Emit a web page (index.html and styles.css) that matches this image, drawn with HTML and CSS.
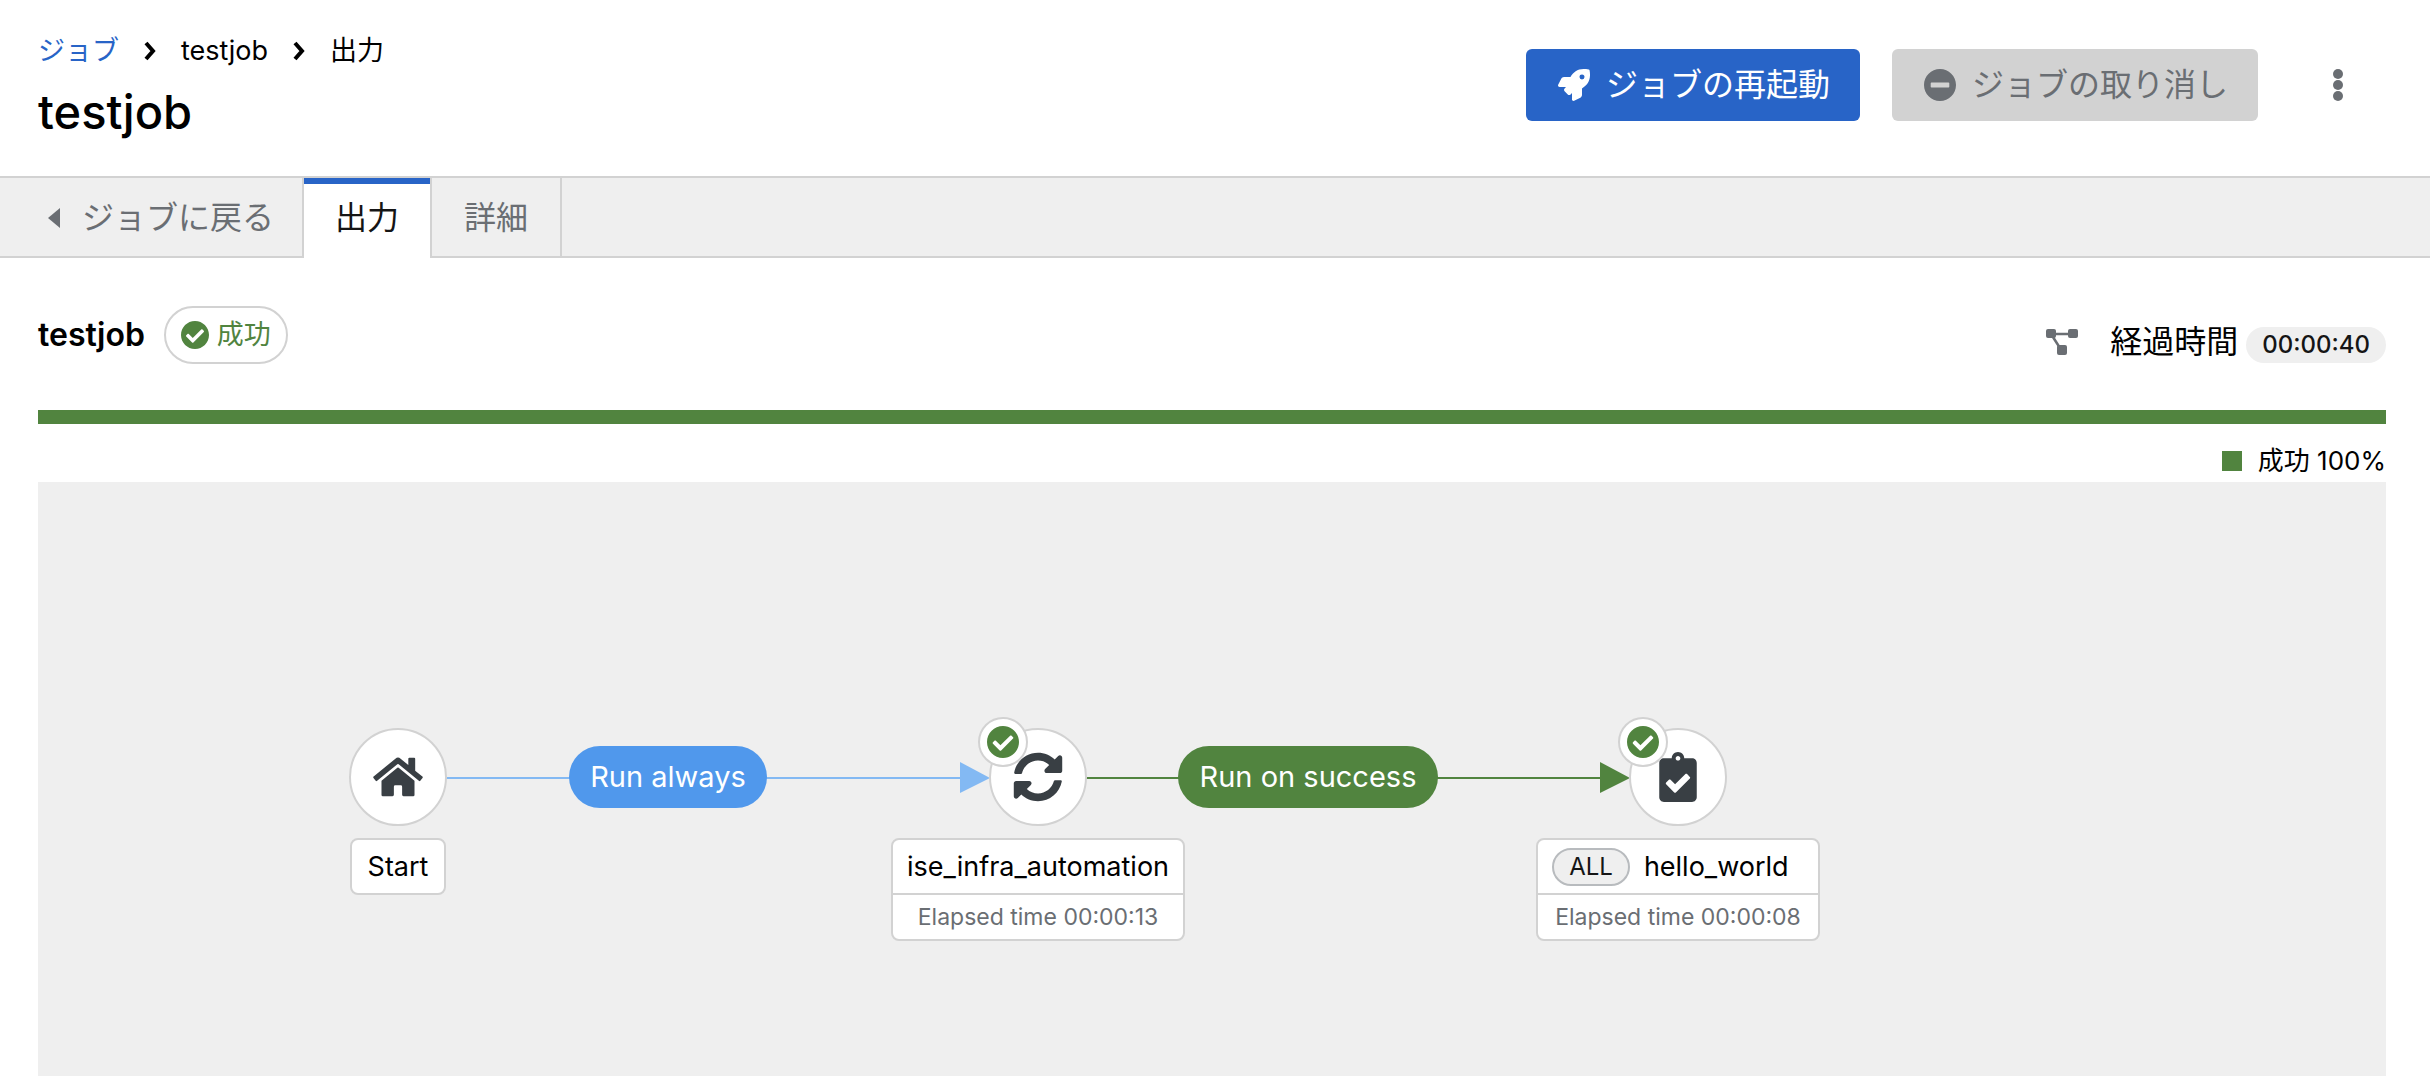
FILE: index.html
```html
<!DOCTYPE html>
<html lang="ja">
<head>
<meta charset="utf-8">
<meta name="viewport" content="width=device-width, initial-scale=1">
<title>testjob - 出力</title>
<link rel="stylesheet" href="styles.css">
</head>
<body>
<svg class="sprite" aria-hidden="true">
  <symbol id="check-circle" viewBox="8 8 496 496"><path d="M504 256c0 136.967-111.033 248-248 248S8 392.967 8 256 119.033 8 256 8s248 111.033 248 248zM227.314 387.314l184-184c6.248-6.248 6.248-16.379 0-22.627l-22.627-22.627c-6.248-6.249-16.379-6.249-22.628 0L216 308.118l-70.059-70.059c-6.248-6.248-16.379-6.248-22.628 0l-22.627 22.627c-6.248 6.248-6.248 16.379 0 22.627l104 104c6.249 6.249 16.379 6.249 22.628.001z"/></symbol>
  <symbol id="chevron" viewBox="0 0 12 20"><path d="M2 2l7 8-7 8" fill="none" stroke="currentColor" stroke-width="4"/></symbol>
</svg>

<header class="page-header">
  <div class="heading">
    <nav aria-label="パンくずリスト">
      <ol class="breadcrumb">
        <li><a href="#jobs">ジョブ</a></li>
        <li><svg class="chevron" aria-hidden="true"><use href="#chevron"/></svg>testjob</li>
        <li><svg class="chevron" aria-hidden="true"><use href="#chevron"/></svg>出力</li>
      </ol>
    </nav>
    <h1>testjob</h1>
  </div>
  <div class="actions">
    <button type="button" class="btn btn-primary">
      <svg viewBox="0 0 512 512" aria-hidden="true"><path d="M505.12 19.094c-1.19-5.531-6.658-11-12.207-12.188C460.716 0 435.507 0 410.407 0 307.175 0 245.269 55.203 199.052 128H94.838c-16.348.016-35.557 11.875-42.887 26.484L2.516 253.297A28.4 28.4 0 0 0 0 264a24.009 24.009 0 0 0 24.006 24h103.81l-22.474 22.469c-11.366 11.361-12.997 32.258 0 45.25l50.904 50.906c11.156 11.188 32.156 13.156 45.277 0l22.475-22.469V488a24.009 24.009 0 0 0 24.006 24 28.56 28.56 0 0 0 10.707-2.516l98.728-49.39c14.629-7.297 26.508-26.5 26.508-42.86V312.797c72.598-46.313 128.035-108.406 128.035-211.094.093-25.203.093-50.406-6.862-82.609zM384.04 168A40 40 0 1 1 424.05 128a40.023 40.023 0 0 1-40.01 40z"/></svg>
      ジョブの再起動
    </button>
    <button type="button" class="btn btn-disabled" disabled>
      <svg viewBox="8 8 496 496" aria-hidden="true"><path d="M256 8C119 8 8 119 8 256s111 248 248 248 248-111 248-248S393 8 256 8zM124 296c-6.600 0-12-5.400-12-12v-56c0-6.600 5.400-12 12-12h264c6.600 0 12 5.400 12 12v56c0 6.600-5.400 12-12 12H124z"/></svg>
      ジョブの取り消し
    </button>
    <button type="button" class="kebab" aria-label="その他の操作">
      <svg viewBox="0 0 10 34" aria-hidden="true"><circle cx="5" cy="6" r="5"/><circle cx="5" cy="17" r="5"/><circle cx="5" cy="28" r="5"/></svg>
    </button>
  </div>
</header>

<nav class="tabs" aria-label="ジョブ">
  <a class="tab tab-back" href="#jobs"><svg viewBox="0 0 12 20" aria-hidden="true"><path d="M12 0v20L0 10z"/></svg>ジョブに戻る</a>
  <a class="tab tab-active" href="#output" aria-current="page">出力</a>
  <a class="tab" href="#details">詳細</a>
</nav>

<main>
  <div class="status-row">
    <div class="status">
      <h2>testjob</h2>
      <span class="status-label"><svg aria-hidden="true"><use href="#check-circle"/></svg>成功</span>
    </div>
    <div class="elapsed">
      <svg viewBox="0 0 32 26" aria-hidden="true"><path d="M6 5h18M5 5l9 14" stroke="currentColor" stroke-width="2.500"/><rect width="10" height="9" rx="2"/><rect x="22" width="10" height="9" rx="2"/><rect x="11" y="16" width="10" height="10" rx="2"/></svg>
      <span>経過時間</span>
      <span class="time-badge">00:00:40</span>
    </div>
  </div>
  <div class="progress" role="img" aria-label="成功 100%"></div>
  <p class="legend"><span class="swatch"></span>成功 100%</p>

  <section class="canvas" aria-label="ワークフロー">
    <svg class="edges" aria-hidden="true">
      <g class="edge-always"><path class="line" d="M360 296H923"/><path class="arrow" d="M922 280l30 16-30 15z"/></g>
      <g class="edge-success"><path class="line" d="M1000 296H1563"/><path class="arrow" d="M1562 280l30 16-30 15z"/></g>
    </svg>
    <div class="edge-label always">Run always</div>
    <div class="edge-label success">Run on success</div>

    <div class="node node-start">
      <div class="disc"><svg class="home" viewBox="0 0 576 512" aria-hidden="true"><path d="M280.370 148.260L96 300.110V464a16 16 0 0 0 16 16l112.060-.290a16 16 0 0 0 15.920-16V368a16 16 0 0 1 16-16h64a16 16 0 0 1 16 16v95.640a16 16 0 0 0 16 16.050L464 480a16 16 0 0 0 16-16V300L295.670 148.260a12.190 12.190 0 0 0-15.300 0zM571.600 251.470L488 182.560V44.050a12 12 0 0 0-12-12h-56a12 12 0 0 0-12 12v72.610L318.470 43a48 48 0 0 0-61 0L4.340 251.470a12 12 0 0 0-1.600 16.900l25.500 31A12 12 0 0 0 45.150 301l235.220-193.740a12.190 12.190 0 0 1 15.300 0L530.900 301a12 12 0 0 0 16.900-1.600l25.500-31a12 12 0 0 0-1.700-16.930z"/></svg></div>
      <div class="card"><div class="name">Start</div></div>
    </div>

    <div class="node node-infra">
      <div class="disc">
        <svg viewBox="0 0 512 512" aria-hidden="true"><path d="M370.720 133.280C339.458 104.008 298.888 87.962 255.848 88c-77.458.068-144.328 53.178-162.791 126.850-1.344 5.363-6.122 9.150-11.651 9.150H24.103c-7.498 0-13.194-6.807-11.807-14.176C33.933 94.924 134.813 8 256 8c66.448 0 126.791 26.136 171.315 68.685L463.030 40.970C478.149 25.851 504 36.559 504 57.941V192c0 13.255-10.745 24-24 24H345.941c-21.382 0-32.090-25.851-16.971-40.971l41.750-41.749zM32 296h134.059c21.382 0 32.090 25.851 16.971 40.971l-41.750 41.750c31.262 29.273 71.835 45.319 114.876 45.280 77.418-.070 144.315-53.144 162.787-126.849 1.344-5.363 6.122-9.150 11.651-9.150h57.304c7.498 0 13.194 6.807 11.807 14.176C478.067 417.076 377.187 504 256 504c-66.448 0-126.791-26.136-171.315-68.685L48.970 471.030C33.851 486.149 8 475.441 8 454.059V320c0-13.255 10.745-24 24-24z"/></svg>
        <span class="node-status"><svg aria-label="成功"><use href="#check-circle"/></svg></span>
      </div>
      <div class="card"><div class="name">ise_infra_automation</div><div class="time">Elapsed time 00:00:13</div></div>
    </div>

    <div class="node node-hello">
      <div class="disc">
        <svg viewBox="0 0 384 512" aria-hidden="true"><path d="M336 64h-80c0-35.300-28.700-64-64-64s-64 28.700-64 64H48C21.500 64 0 85.500 0 112v352c0 26.500 21.500 48 48 48h288c26.500 0 48-21.500 48-48V112c0-26.500-21.500-48-48-48zM192 40c13.300 0 24 10.700 24 24s-10.700 24-24 24-24-10.700-24-24 10.700-24 24-24zm121.200 231.800l-143 141.800c-4.700 4.700-12.300 4.600-17-.100l-82.600-83.300c-4.700-4.700-4.600-12.300.100-17L99.100 285c4.700-4.700 12.300-4.600 17 .100l46 46.400 106-105.200c4.700-4.700 12.300-4.600 17 .100l28.200 28.400c4.700 4.800 4.600 12.300-.100 17z"/></svg>
        <span class="node-status"><svg aria-label="成功"><use href="#check-circle"/></svg></span>
      </div>
      <div class="card"><div class="name name-converge"><span class="all">ALL</span>hello_world</div><div class="time">Elapsed time 00:00:08</div></div>
    </div>
  </section>
</main>
</body>
</html>
```
FILE: styles.css
```css
* { box-sizing: border-box; }

body {
  margin: 0;
  min-height: 100vh;
  display: flex;
  flex-direction: column;
  background: #fff;
  color: #000;
  font-family: Inter, "Noto Sans CJK JP", sans-serif;
  font-size: 27px;
  line-height: 40px;
}

h1, h2, p, ol { margin: 0; padding: 0; }
button { font: inherit; border: 0; }
a { text-decoration: none; }
svg { fill: currentColor; flex: none; }
.sprite { position: absolute; width: 0; height: 0; }

.page-header {
  display: flex;
  justify-content: space-between;
  align-items: flex-start;
  padding: 31px 44px 33px 38px;
}

.breadcrumb { display: flex; list-style: none; }
.breadcrumb li { display: flex; align-items: center; }
.breadcrumb a { color: #2864c7; }
.chevron { width: 12px; height: 20px; margin: 0 25px; }

h1 { padding-top: 10px; font-size: 47px; line-height: 62px; font-weight: 500; }

.actions { display: flex; gap: 32px; padding-top: 18px; }
.btn {
  display: flex;
  align-items: center;
  gap: 16px;
  padding: 16px 30px 16px 32px;
  border-radius: 6px;
  font-size: 32px;
}
.btn svg { width: 32px; height: 32px; }
.btn-primary { background: #2864c7; color: #fff; }
.btn-disabled { background: #d2d2d2; color: #6a6e73; }
.kebab { padding: 18px 43px; background: none; color: #6a6e73; }
.kebab svg { display: block; width: 10px; height: 34px; }

.tabs {
  display: flex;
  background: #efefef;
  border-top: 2px solid #d2d2d2;
  box-shadow: inset 0 -2px #d2d2d2;
  font-size: 32px;
}
.tab {
  display: flex;
  align-items: center;
  padding: 20px 32px;
  border-right: 2px solid #d2d2d2;
  color: #6a6e73;
}
.tab-back { gap: 22px; padding-left: 48px; padding-right: 28px; }
.tab-back svg { width: 12px; height: 20px; }
.tab-active { padding: 20px 31px; background: #fff; color: #151515; box-shadow: inset 0 6px #2864c7; }

main { flex: 1; display: flex; flex-direction: column; padding: 48px 44px 0 38px; }

.status-row { display: flex; justify-content: space-between; align-items: flex-start; }
.status { display: flex; align-items: center; gap: 19px; }
h2 { font-size: 32px; font-weight: 600; }
.status-label {
  display: flex;
  align-items: center;
  gap: 8px;
  padding: 7px 15px;
  border: 2px solid #d2d2d2;
  border-radius: 30px;
  color: #51843f;
}
.status-label svg { width: 28px; height: 28px; }
.elapsed { display: flex; align-items: center; gap: 8px; padding-top: 15px; font-size: 32px; }
.elapsed svg { width: 32px; height: 26px; margin-right: 24px; color: #6a6e73; }
.time-badge {
  margin-top: 6px;
  padding: 0 16px;
  border-radius: 18px;
  background: #efefef;
  color: #151515;
  font-size: 24px;
  line-height: 36px;
  font-weight: 500;
}

.progress { height: 14px; margin-top: 46px; background: #51843f; }
.legend {
  display: flex;
  justify-content: flex-end;
  align-items: center;
  gap: 16px;
  margin: 17px 0 1px;
  font-size: 26px;
}
.swatch { width: 20px; height: 20px; background: #51843f; }

.canvas { position: relative; flex: 1; min-height: 590px; overflow: hidden; background: #efefef; }
.edges { position: absolute; left: 0; top: 0; width: 100%; height: 100%; }
.line { fill: none; stroke: currentColor; stroke-width: 2; }
.edge-always { color: #83b9f3; }
.edge-success { color: #51843f; }

.edge-label {
  position: absolute;
  top: 264px;
  border-radius: 31px;
  color: #fff;
  font-size: 29px;
  line-height: 62px;
  text-align: center;
}
.always { left: 531px; width: 198px; background: #5098ec; }
.success { left: 1140px; width: 260px; background: #51843f; }

.node {
  position: absolute;
  top: 246px;
  width: 400px;
  display: flex;
  flex-direction: column;
  align-items: center;
  gap: 12px;
}
.node-start { left: 160px; }
.node-infra { left: 800px; }
.node-hello { left: 1440px; }

.disc {
  position: relative;
  display: flex;
  align-items: center;
  justify-content: center;
  width: 98px;
  height: 98px;
  border: 2px solid #d2d2d2;
  border-radius: 50%;
  background: #fff;
  color: #393f44;
}
.disc svg { width: 50px; height: 50px; }
.disc .home { height: 44px; }
.node-status {
  position: absolute;
  left: -13px;
  top: -13px;
  display: flex;
  align-items: center;
  justify-content: center;
  width: 50px;
  height: 50px;
  border: 2px solid #d2d2d2;
  border-radius: 50%;
  background: #fff;
  color: #51843f;
}
.disc .node-status svg { width: 32px; height: 32px; }

.card { min-width: 96px; border: 2px solid #d2d2d2; border-radius: 8px; background: #fff; }
.name {
  display: flex;
  align-items: center;
  justify-content: center;
  gap: 16px;
  height: 53px;
  padding: 0 14px;
}
.name-converge { justify-content: flex-start; gap: 14px; }
.time {
  padding: 0 17px;
  border-top: 2px solid #d2d2d2;
  color: #6a6e73;
  font-size: 23px;
  line-height: 44px;
  text-align: center;
}
.all {
  padding: 0 15px;
  border: 2px solid #b8bbbe;
  border-radius: 19px;
  background: #efefef;
  color: #151515;
  font-size: 24px;
  line-height: 34px;
}
```
